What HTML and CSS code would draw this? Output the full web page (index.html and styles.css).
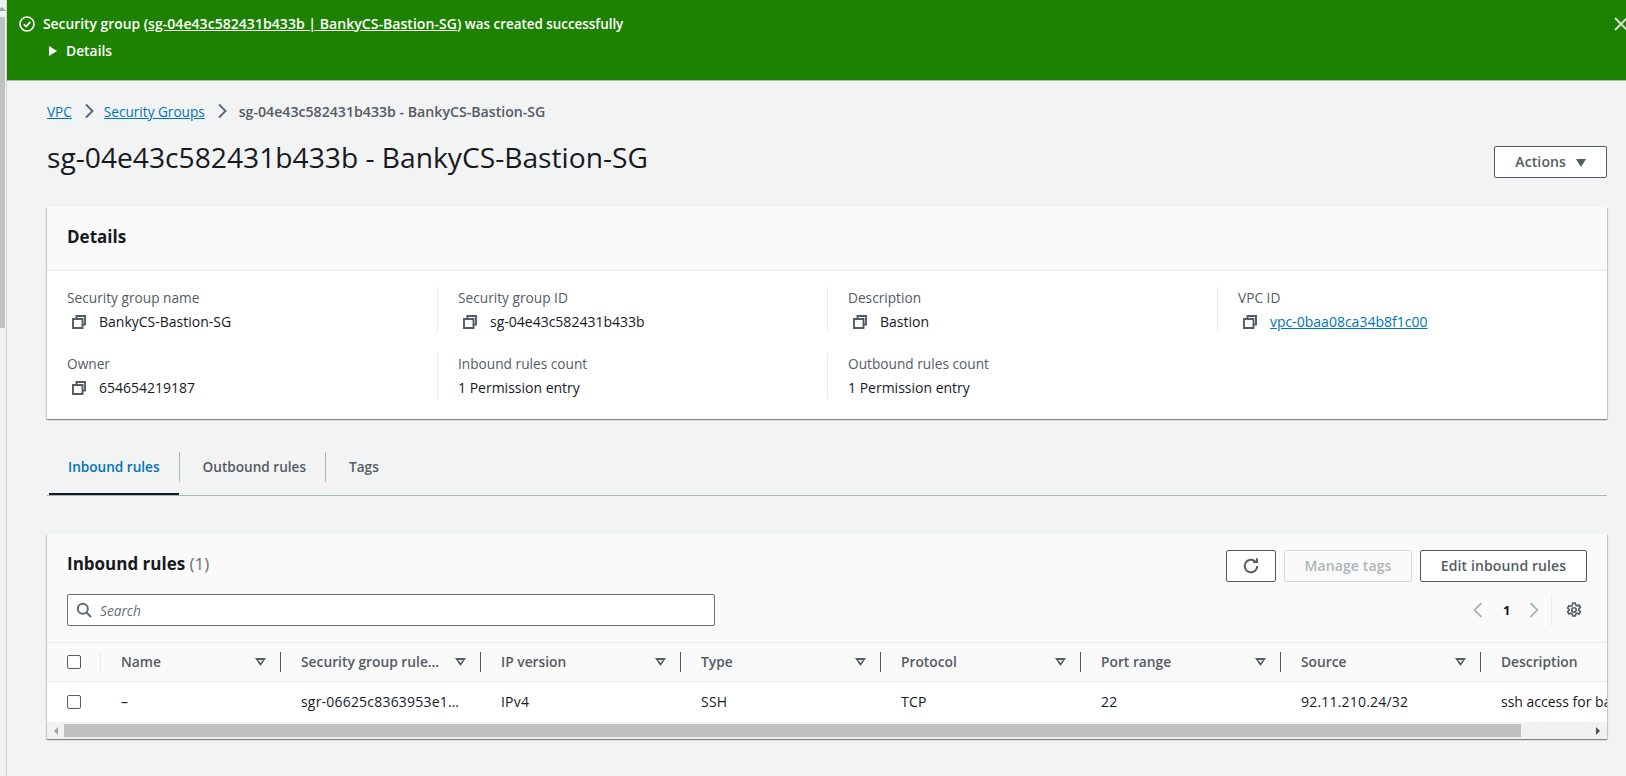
FILE: index.html
```html
<!DOCTYPE html>
<html lang="en">
<head>
    <meta charset="UTF-8">
    <meta name="viewport" content="width=device-width, initial-scale=1.0">
    <title>Security Group</title>
    <link rel="stylesheet" href="styles.css">
</head>
<body>
    <div class="page-scrollbar">
        <span class="page-scrollbar-arrow"></span>
        <div class="page-scrollbar-thumb"></div>
    </div>

    <div class="main">
        <div class="flash">
            <svg class="flash-icon" width="16" height="16" viewBox="0 0 16 16"><circle cx="8" cy="8" r="7" fill="none" stroke="#fff" stroke-width="1.6"/><path d="M4.8 8.2l2.3 2.3 4.2-4.6" fill="none" stroke="#fff" stroke-width="1.6"/></svg>
            <div class="flash-body">
                <div class="flash-title">Security group (<a href="#">sg-04e43c582431b433b | BankyCS-Bastion-SG</a>)<span class="flash-rest"> was created successfully</span></div>
                <div class="flash-details"><span class="flash-caret"></span>Details</div>
            </div>
            <svg class="flash-close" width="16" height="16" viewBox="0 0 16 16"><path d="M2 2l12 12M14 2L2 14" fill="none" stroke="#e6e6e6" stroke-width="1.8"/></svg>
        </div>

        <div class="content">
            <nav class="crumbs">
                <a href="#">VPC</a>
                <svg class="crumb-sep" width="16" height="16" viewBox="0 0 16 16"><path d="M5 1.5L11.5 8 5 14.5" fill="none" stroke="#5f6b7a" stroke-width="2"/></svg>
                <a href="#">Security Groups</a>
                <svg class="crumb-sep" width="16" height="16" viewBox="0 0 16 16"><path d="M5 1.5L11.5 8 5 14.5" fill="none" stroke="#5f6b7a" stroke-width="2"/></svg>
                <span class="crumb-current">sg-04e43c582431b433b - BankyCS-Bastion-SG</span>
            </nav>

            <div class="page-head">
                <h1>sg-04e43c582431b433b - BankyCS-Bastion-SG</h1>
                <button class="btn btn-actions">Actions <span class="caret"></span></button>
            </div>

            <section class="card details-card">
                <h2 class="card-head">Details</h2>
                <div class="details-grid">
                    <div class="field">
                        <div class="field-label">Security group name</div>
                        <div class="field-value"><svg class="copy" width="14" height="14" viewBox="0 0 14 14"><path d="M4.5 3.5V1H13v8.5h-2.5M1 4h9.5v9H1z" fill="none" stroke="#545b64" stroke-width="1.9"/></svg>BankyCS-Bastion-SG</div>
                    </div>
                    <div class="field">
                        <div class="field-label">Security group ID</div>
                        <div class="field-value"><svg class="copy" width="14" height="14" viewBox="0 0 14 14"><path d="M4.5 3.5V1H13v8.5h-2.5M1 4h9.5v9H1z" fill="none" stroke="#545b64" stroke-width="1.9"/></svg>sg-04e43c582431b433b</div>
                    </div>
                    <div class="field">
                        <div class="field-label">Description</div>
                        <div class="field-value"><svg class="copy" width="14" height="14" viewBox="0 0 14 14"><path d="M4.5 3.5V1H13v8.5h-2.5M1 4h9.5v9H1z" fill="none" stroke="#545b64" stroke-width="1.9"/></svg>Bastion</div>
                    </div>
                    <div class="field">
                        <div class="field-label">VPC ID</div>
                        <div class="field-value"><svg class="copy" width="14" height="14" viewBox="0 0 14 14"><path d="M4.5 3.5V1H13v8.5h-2.5M1 4h9.5v9H1z" fill="none" stroke="#545b64" stroke-width="1.9"/></svg><a href="#">vpc-0baa08ca34b8f1c00</a></div>
                    </div>
                    <div class="field">
                        <div class="field-label">Owner</div>
                        <div class="field-value"><svg class="copy" width="14" height="14" viewBox="0 0 14 14"><path d="M4.5 3.5V1H13v8.5h-2.5M1 4h9.5v9H1z" fill="none" stroke="#545b64" stroke-width="1.9"/></svg>654654219187</div>
                    </div>
                    <div class="field">
                        <div class="field-label">Inbound rules count</div>
                        <div class="field-value">1 Permission entry</div>
                    </div>
                    <div class="field">
                        <div class="field-label">Outbound rules count</div>
                        <div class="field-value">1 Permission entry</div>
                    </div>
                </div>
            </section>

            <div class="tabs">
                <div class="tab tab-active">Inbound rules</div>
                <div class="tab">Outbound rules</div>
                <div class="tab">Tags</div>
            </div>

            <section class="card rules-card">
                <div class="rules-top">
                    <h2 class="rules-title">Inbound rules <span class="rules-count">(1)</span></h2>
                    <div class="rules-buttons">
                        <button class="btn btn-refresh"><svg width="18" height="18" viewBox="0 0 16 16"><path d="M13.6 8a5.6 5.6 0 1 1-1.9-4.2" fill="none" stroke="#545b64" stroke-width="1.7"/><path d="M13.3 1v3.5H9.8" fill="none" stroke="#545b64" stroke-width="1.7"/></svg></button>
                        <button class="btn btn-disabled">Manage tags</button>
                        <button class="btn btn-edit">Edit inbound rules</button>
                    </div>
                </div>
                <div class="rules-filter">
                    <div class="search">
                        <svg width="16" height="16" viewBox="0 0 16 16"><circle cx="6.8" cy="6.8" r="5" fill="none" stroke="#5f6b7a" stroke-width="2"/><path d="M10.5 10.5L15 15" fill="none" stroke="#5f6b7a" stroke-width="2"/></svg>
                        <span>Search</span>
                    </div>
                    <div class="pager">
                        <svg width="16" height="16" viewBox="0 0 16 16"><path d="M11.5 1L4.5 8l7 7" fill="none" stroke="#aab7b8" stroke-width="1.8"/></svg>
                        <span class="pager-num">1</span>
                        <svg width="16" height="16" viewBox="0 0 16 16"><path d="M4.5 1l7 7-7 7" fill="none" stroke="#aab7b8" stroke-width="1.8"/></svg>
                        <div class="pager-sep"></div>
                        <svg width="16" height="16" viewBox="0 0 16 16"><circle cx="8" cy="8" r="2.2" fill="none" stroke="#545b64" stroke-width="1.6"/><path d="M6.7 1h2.6l.4 2 1.5.8 1.9-.7 1.300 2.300-1.500 1.300v1.600l1.500 1.300-1.300 2.300-1.900-.7-1.500.8-.4 2H6.700l-.4-2-1.500-.8-1.900.7-1.300-2.300 1.500-1.300V7.300L1.600 6l1.300-2.300 1.900.7 1.500-.8z" fill="none" stroke="#545b64" stroke-width="1.6"/></svg>
                    </div>
                </div>
                <div class="rules-table">
                    <div class="row row-head">
                        <div class="cell-check"><span class="checkbox"></span></div>
                        <div class="cell cell-name">Name<span class="filter"></span></div>
                        <div class="cell">Security group rule…<span class="filter"></span></div>
                        <div class="cell">IP version<span class="filter"></span></div>
                        <div class="cell">Type<span class="filter"></span></div>
                        <div class="cell">Protocol<span class="filter"></span></div>
                        <div class="cell">Port range<span class="filter"></span></div>
                        <div class="cell">Source<span class="filter"></span></div>
                        <div class="cell cell-last">Description</div>
                    </div>
                    <div class="row row-body">
                        <div class="cell-check"><span class="checkbox"></span></div>
                        <div class="cell cell-name">–</div>
                        <div class="cell">sgr-06625c8363953e1…</div>
                        <div class="cell">IPv4</div>
                        <div class="cell">SSH</div>
                        <div class="cell">TCP</div>
                        <div class="cell">22</div>
                        <div class="cell">92.11.210.24/32</div>
                        <div class="cell cell-last">ssh access for bastion</div>
                    </div>
                </div>
                <div class="hscroll">
                    <span class="hscroll-left"></span>
                    <div class="hscroll-thumb"></div>
                    <span class="hscroll-right"></span>
                </div>
            </section>
        </div>
    </div>
</body>
</html>
```

FILE: styles.css
```css
* {
    box-sizing: border-box;
}

html, body {
    height: 100%;
}

body {
    margin: 0;
    display: flex;
    overflow: hidden;
    font-family: "Open Sans", "Noto Sans", Arial, sans-serif;
    font-size: 14px;
    color: #16191f;
    background-color: #f2f3f3;
}

a {
    color: #0073bb;
}

/* window scrollbar on the left */
.page-scrollbar {
    width: 7px;
    flex: none;
    overflow: hidden;
    background-color: #f1f1f1;
    border-right: 1px solid #d5d5d5;
}

.page-scrollbar-arrow {
    display: block;
    width: 0;
    height: 0;
    margin: 7px 0 0 -2px;
    border-bottom: 4px solid #a3a3a3;
    border-left: 4px solid transparent;
    border-right: 4px solid transparent;
}

.page-scrollbar-thumb {
    width: 5px;
    height: 311px;
    margin-top: 6px;
    background-color: #c1c1c1;
}

.main {
    flex: 1;
    min-width: 0;
}

.flash {
    height: 81px;
    display: flex;
    padding: 15px 0 0 12px;
    background-color: #1d8102;
    border-bottom: 1px solid #aab7b8;
    color: #fff;
    font-weight: 600;
    font-size: 13.85px;
}

.flash-icon {
    flex: none;
    margin: 1px 8px 0 0;
}

.flash-body {
    flex: 1;
    line-height: 18px;
}

.flash-title a {
    color: #fff;
    font-size: 14.1px;
}

.flash-rest {
    font-size: 13.4px;
}

.flash-details {
    display: flex;
    align-items: center;
    margin-top: 9px;
}

.flash-caret {
    width: 0;
    height: 0;
    margin: 0 9px 0 6px;
    border-left: 8px solid #fff;
    border-top: 5px solid transparent;
    border-bottom: 5px solid transparent;
}

.flash-close {
    flex: none;
    margin: 1px -3px 0 0;
}

.content {
    padding: 19px 19px 0 40px;
}

.crumbs {
    display: flex;
    align-items: center;
    height: 22px;
    font-size: 13.6px;
}

.crumb-sep {
    margin: 0 7px 0 9px;
}

.crumb-current {
    color: #545b64;
    font-weight: 600;
    font-size: 14.15px;
    margin-left: 2px;
}

.page-head {
    display: flex;
    justify-content: space-between;
    align-items: flex-start;
    height: 40px;
    margin-top: 17px;
}

h1 {
    margin: 0;
    font-size: 28.2px;
    font-weight: 400;
    line-height: 36px;
}

.btn {
    height: 32px;
    padding-bottom: 3px;
    font-family: inherit;
    font-size: 14px;
    font-weight: 600;
    letter-spacing: 0.1px;
    color: #545b64;
    background-color: #fff;
    border: 1px solid #545b64;
    border-radius: 2px;
}

.btn-actions {
    width: 113px;
    margin-top: 7px;
}

.caret {
    display: inline-block;
    margin-left: 6px;
    border-top: 8px solid #545b64;
    border-left: 5.5px solid transparent;
    border-right: 5.5px solid transparent;
}

.card {
    background-color: #fff;
    box-shadow: 0 1px 1px 0 rgba(0, 28, 36, 0.3), 1px 1px 1px 0 rgba(0, 28, 36, 0.15), -1px 1px 1px 0 rgba(0, 28, 36, 0.15);
}

.details-card {
    margin-top: 28px;
    height: 212px;
}

.card-head {
    margin: 0;
    height: 64px;
    padding: 19px 20px 0;
    font-size: 17px;
    line-height: 22px;
    font-weight: 700;
    background-color: #fafafa;
    border-bottom: 1px solid #eaeded;
}

.details-grid {
    display: grid;
    grid-template-columns: 391px 390px 390px 1fr;
    row-gap: 20px;
    padding: 16px 0 0 20px;
}

.field {
    height: 46px;
    line-height: 22px;
    border-right: 1px solid #eaeded;
    margin-right: 20px;
}

.field:nth-child(4), .field:nth-child(7) {
    border-right: none;
}

.field-label {
    color: #545b64;
    font-size: 13.7px;
}

.field-value {
    display: flex;
    align-items: center;
    margin-top: 2px;
}

.copy {
    margin: 0 13px 0 5px;
}

.tabs {
    display: flex;
    height: 58px;
    margin-top: 19px;
    padding: 14px 0 0 2px;
    border-bottom: 1px solid #aab7b8;
    font-weight: 600;
    font-size: 13.6px;
    color: #545b64;
}

.tab {
    height: 30px;
    line-height: 30px;
    padding: 0 19px 0 23px;
    border-right: 1px solid #aab7b8;
    position: relative;
}

.tab:last-child {
    border-right: none;
}

.tab-active {
    padding: 0 19px;
    color: #0073bb;
}

.tab-active::after {
    content: "";
    position: absolute;
    left: 0;
    right: 0;
    top: 41px;
    height: 2px;
    background-color: #16191f;
}

.rules-card {
    margin-top: 38px;
    height: 205px;
    background-color: #fafafa;
}

.rules-top {
    display: flex;
    justify-content: space-between;
    padding: 16px 20px 0;
}

.rules-title {
    margin: 0;
    font-size: 17px;
    line-height: 28px;
    font-weight: 700;
}

.rules-count {
    font-weight: 400;
    color: #687078;
}

.rules-buttons {
    display: flex;
    gap: 8px;
}

.btn-refresh {
    width: 50px;
    padding: 4px 0 0;
}

.btn-disabled {
    width: 128px;
    color: #aab7b8;
    border-color: #d5dbdb;
    background-color: #fafafa;
}

.btn-edit {
    width: 167px;
}

.rules-filter {
    display: flex;
    justify-content: space-between;
    align-items: center;
    height: 32px;
    margin-top: 12px;
    padding: 0 20px;
}

.search {
    width: 648px;
    height: 32px;
    display: flex;
    align-items: center;
    gap: 8px;
    padding-left: 8px;
    background-color: #fff;
    border: 1px solid #687078;
    border-radius: 2px;
    font-style: italic;
    font-size: 13.7px;
    color: #687078;
}

.pager {
    display: flex;
    align-items: center;
    padding-right: 5px;
}

.pager-num {
    width: 8px;
    margin: 0 15px 0 17px;
    font-weight: 700;
    font-size: 13px;
}

.pager-sep {
    width: 1px;
    height: 32px;
    margin: 0 14px 0 9px;
    background-color: #eaeded;
}

.rules-table {
    margin-top: 16px;
}

.row {
    display: flex;
    align-items: center;
    overflow: hidden;
}

.row-head {
    height: 40px;
    font-size: 13.8px;
    font-weight: 600;
    color: #545b64;
    border-top: 1px solid #eaeded;
    border-bottom: 1px solid #eaeded;
}

.row-body {
    height: 40px;
    letter-spacing: 0.2px;
    background-color: #fff;
}

.row-body .cell-last {
    letter-spacing: 0;
}

.cell-check {
    flex: none;
    width: 54px;
    height: 20px;
    padding-left: 20px;
    display: flex;
    align-items: center;
}

.row-head .cell-check {
    border-right: 1px solid #eaeded;
}

.checkbox {
    width: 14px;
    height: 14px;
    background-color: #fff;
    border: 1px solid #545b64;
    border-radius: 2px;
}

.cell {
    flex: none;
    width: 200px;
    height: 20px;
    line-height: 20px;
    padding-left: 20px;
    position: relative;
    white-space: nowrap;
}

.cell-name {
    width: 180px;
}

.row-head .cell {
    border-right: 1px solid #545b64;
}

.row-head .cell-last {
    border-right: none;
}

.filter {
    position: absolute;
    right: 14px;
    top: 6px;
    width: 11px;
    height: 8px;
    clip-path: polygon(0 0, 100% 0, 50% 100%);
    background-color: #545b64;
}

.filter::after {
    content: "";
    position: absolute;
    left: 3px;
    top: 2px;
    width: 5px;
    height: 3px;
    clip-path: polygon(0 0, 100% 0, 50% 100%);
    background-color: #fafafa;
}

.hscroll {
    display: flex;
    align-items: center;
    height: 17px;
    background-color: #f1f1f1;
}

.hscroll-left {
    flex: none;
    width: 0;
    height: 0;
    margin: 0 6px 0 7px;
    border-right: 4px solid #a3a3a3;
    border-top: 4px solid transparent;
    border-bottom: 4px solid transparent;
}

.hscroll-thumb {
    width: 1457px;
    height: 13px;
    background-color: #c1c1c1;
}

.hscroll-right {
    flex: none;
    width: 0;
    height: 0;
    margin-left: auto;
    margin-right: 7px;
    border-left: 4px solid #505050;
    border-top: 4px solid transparent;
    border-bottom: 4px solid transparent;
}
```
